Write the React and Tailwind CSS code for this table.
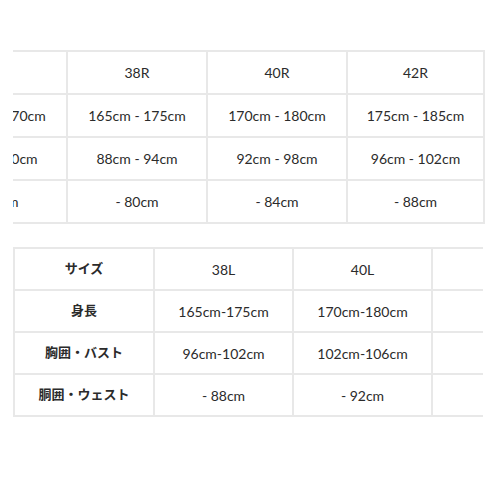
const topRows = [
  ["", "38R", "40R", "42R"],
  ["160cm - 170cm", "165cm - 175cm", "170cm - 180cm", "175cm - 185cm"],
  ["80cm - 90cm", "88cm - 94cm", "92cm - 98cm", "96cm - 102cm"],
  ["- 76cm", "- 80cm", "- 84cm", "- 88cm"],
];

const bottomRows = [
  ["サイズ", "38L", "40L", ""],
  ["身長", "165cm-175cm", "170cm-180cm", ""],
  ["胸囲・バスト", "96cm-102cm", "102cm-106cm", ""],
  ["胴囲・ウェスト", "- 88cm", "- 92cm", ""],
];

const font = {
  fontFamily: 'Lato, "Noto Sans CJK JP", sans-serif',
};

export default function App() {
  return (
    <div
      className="w-[498px] h-[498px] bg-white text-[14px] text-[#2b2b2b] pt-[50px]"
      style={font}
    >
      {/* table is scrolled sideways, first column partly hidden */}
      <div className="ml-[13px] w-[472px] overflow-hidden">
        <table className="-ml-[87px] border-collapse table-fixed">
          <tbody>
            {topRows.map((row, i) => (
              <tr key={i} className="h-[43px]">
                {row.map((cell, j) => (
                  <td
                    key={j}
                    className={
                      "border-2 border-[#e8e8e8] text-center whitespace-nowrap p-0 " +
                      (j === 3 ? "w-[137px] min-w-[137px]" : "w-[140px] min-w-[140px]")
                    }
                  >
                    {cell}
                  </td>
                ))}
              </tr>
            ))}
          </tbody>
        </table>
      </div>

      <div className="ml-[13px] mt-[23px] w-[470px] overflow-hidden">
        <table className="border-collapse table-fixed">
          <tbody>
            {bottomRows.map((row, i) => (
              <tr key={i} className="h-[42px]">
                {row.map((cell, j) => (
                  <td
                    key={j}
                    className={
                      "border-2 border-[#e8e8e8] text-center whitespace-nowrap p-0 " +
                      (j === 0
                        ? "w-[140px] min-w-[140px] font-bold text-[13px]"
                        : "w-[139px] min-w-[139px]")
                    }
                  >
                    {cell}
                  </td>
                ))}
              </tr>
            ))}
          </tbody>
        </table>
      </div>
    </div>
  );
}
